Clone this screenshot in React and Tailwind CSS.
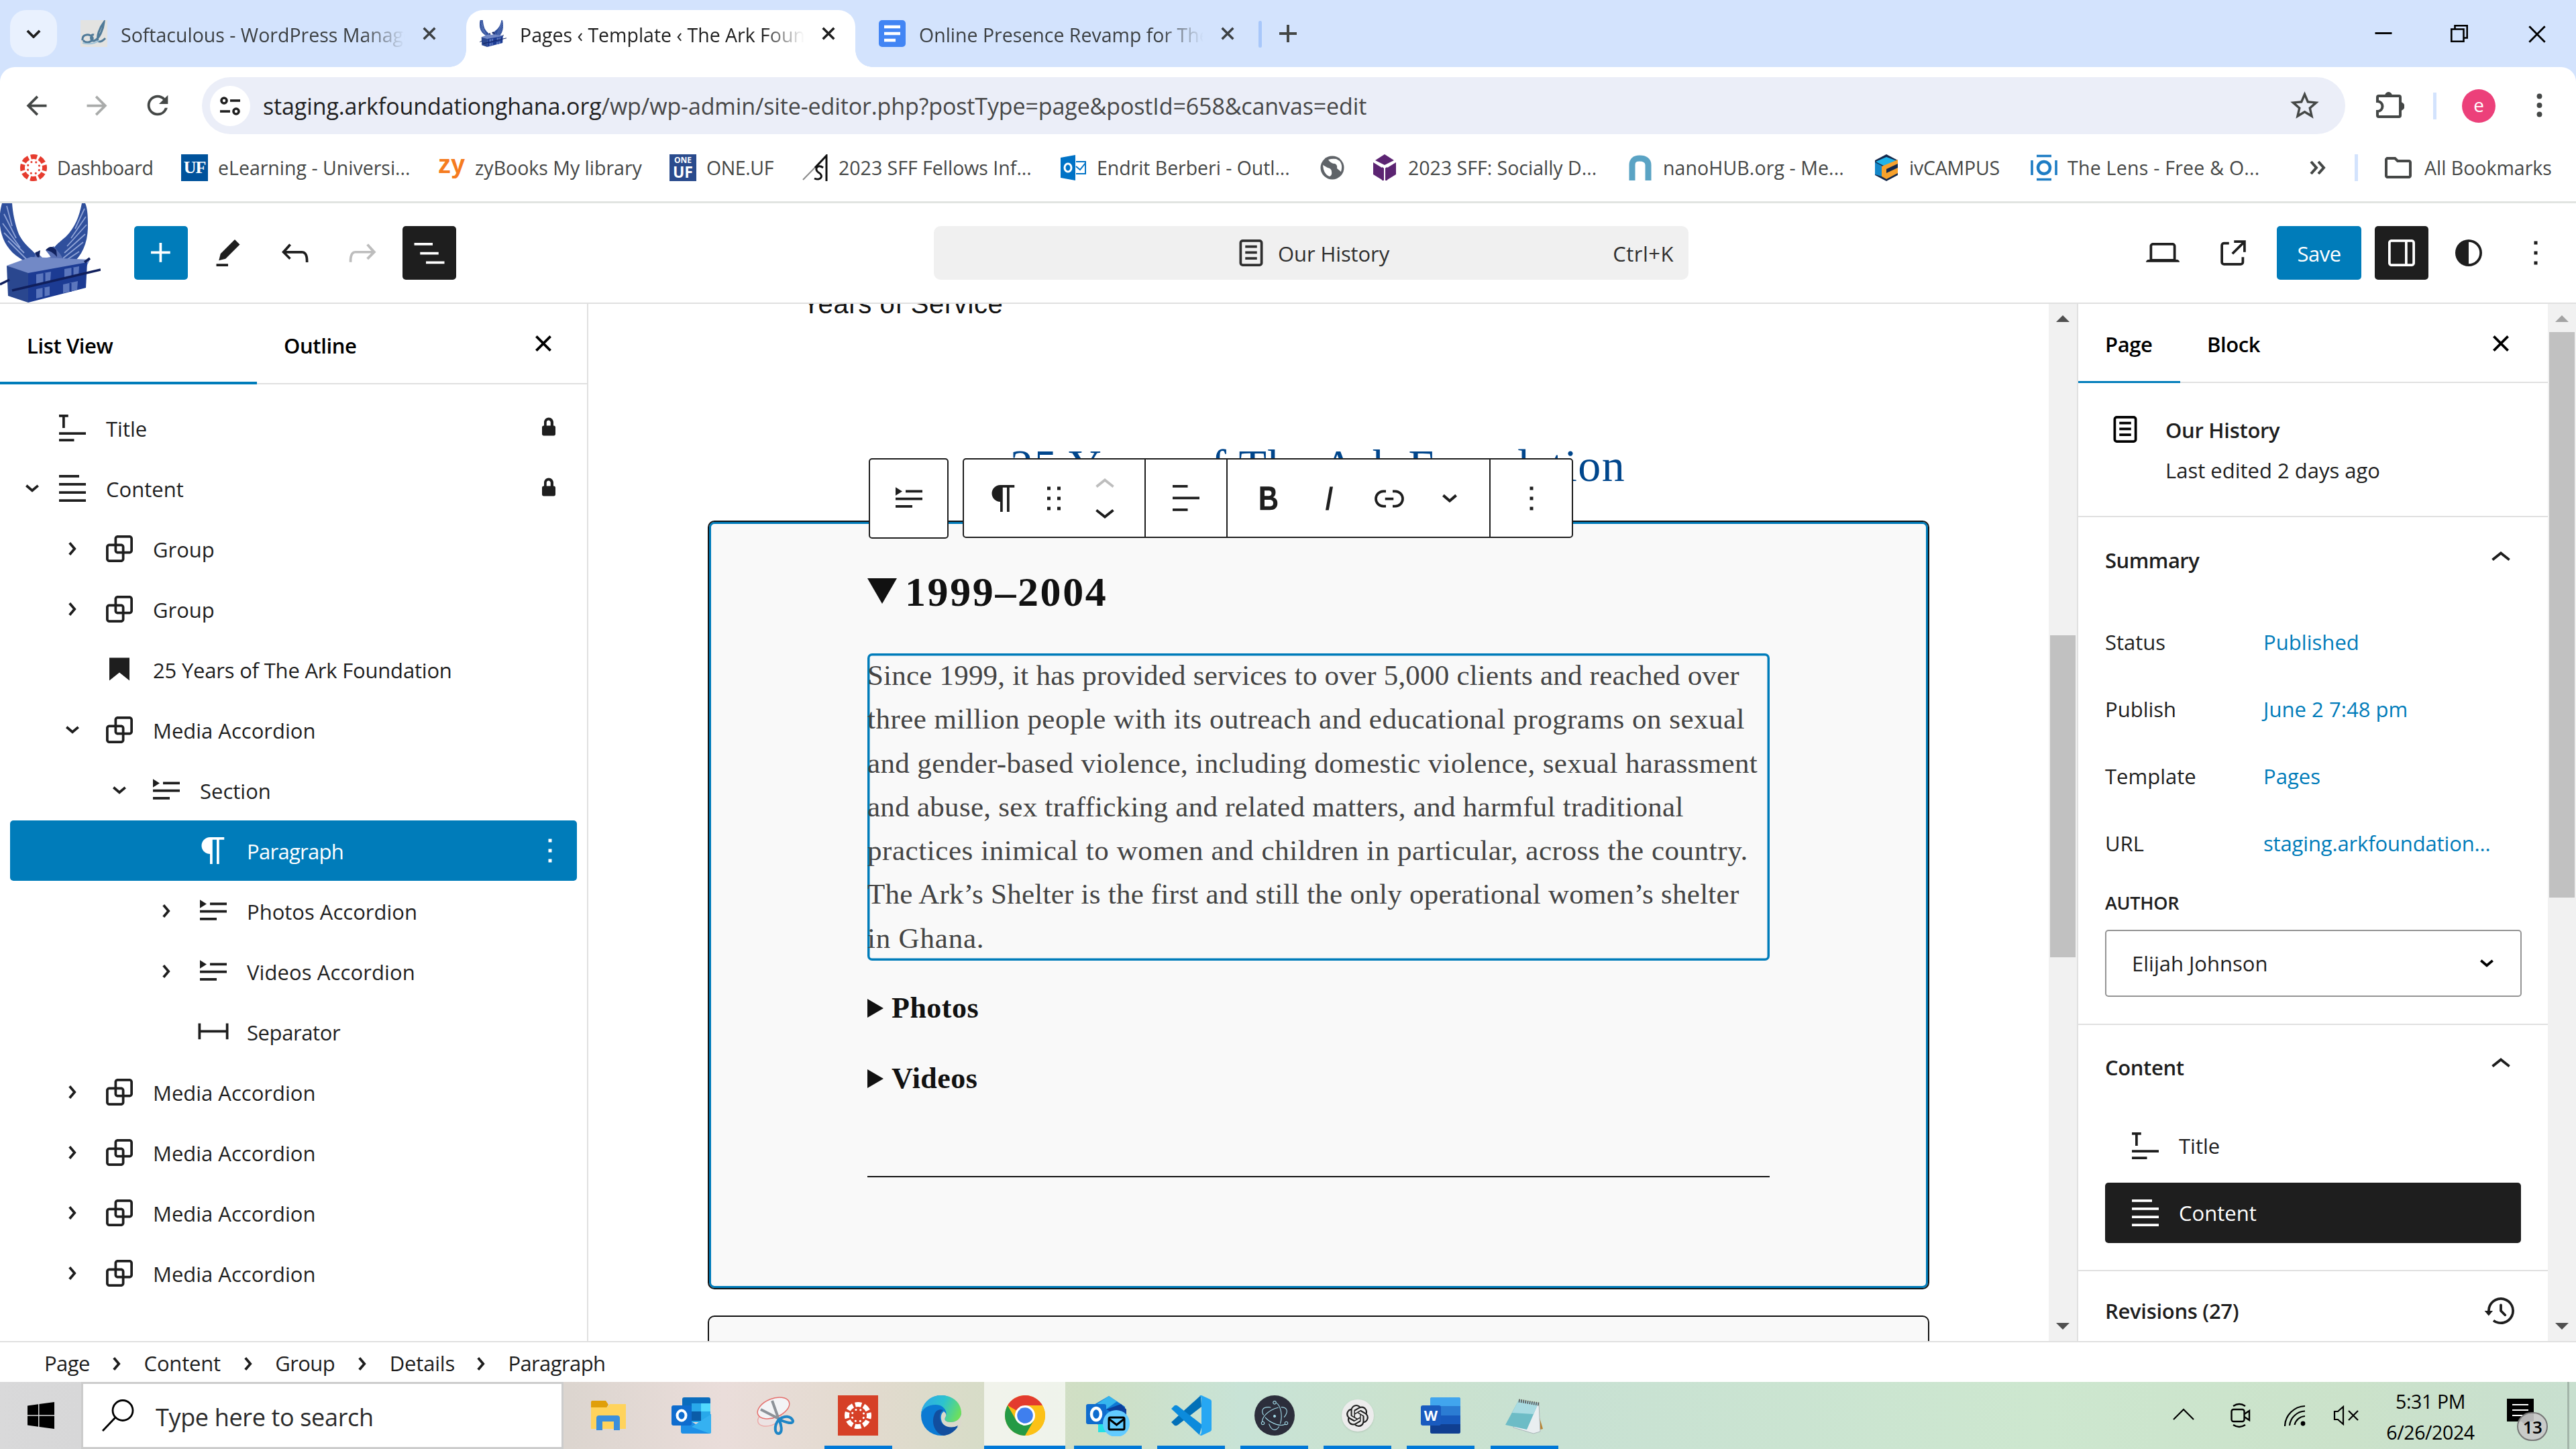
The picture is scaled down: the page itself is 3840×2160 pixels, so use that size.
import React from "react";
import { MdArrowBack, MdArrowForward, MdRefresh, MdStarBorder, MdOutlineFolder } from "react-icons/md";
import { SiOpenai, SiElectron } from "react-icons/si";

const P = {
  plus: "M11 12.5V17.5H12.5V12.5H17.5V11H12.5V6H11V11H6V12.5H11Z",
  edit: "m19 7-3-3-8.5 8.5-1 4 4-1L19 7Zm-7 11.5H5V20h7v-1.5Z",
  undo: "M18.3 11.7c-.6-.6-1.4-.9-2.3-.9H6.7l2.9-3.3-1.1-1-4.5 5L8.5 16l1-1-2.7-2.7H16c.5 0 .9.2 1.3.5 1 1 1 3.4 1 4.5v.3h1.5v-.2c0-1.5 0-4.3-1.5-5.7z",
  redo: "M15.6 6.5l-1.1 1 2.9 3.3H8c-.9 0-1.7.3-2.3.9-1.4 1.5-1.4 4.2-1.4 5.6v.2h1.5v-.3c0-1.1 0-3.5 1-4.5.3-.3.7-.5 1.3-.5h9.2L14.5 15l1.1 1.1 4.6-4.6-4.6-5z",
  listView: "M3 6h11v1.5H3V6Zm3.5 5.5h11V13h-11v-1.5ZM21 17H10v1.5h11V17Z",
  page: "M15.5 7.5h-7V9h7V7.5Zm-7 3.5h7v1.5h-7V11Zm7 3.5h-7V16h7v-1.5Z M17 4H7a2 2 0 0 0-2 2v12a2 2 0 0 0 2 2h10a2 2 0 0 0 2-2V6a2 2 0 0 0-2-2ZM7 5.5h10a.5.5 0 0 1 .5.5v12a.5.5 0 0 1-.5.5H7a.5.5 0 0 1-.5-.5V6a.5.5 0 0 1 .5-.5Z",
  desktop: "M20.5 16h-.7V8c0-1.1-.9-2-2-2H6.2c-1.1 0-2 .9-2 2v8h-.7c-.8 0-1.5.7-1.5 1.5h20c0-.8-.7-1.5-1.5-1.5zM5.7 8c0-.3.2-.5.5-.5h11.6c.3 0 .5.2.5.5v7.6H5.7V8z",
  external: "M19.5 4.5h-7V6h4.44l-5.97 5.97 1.06 1.06L18 7.06v4.44h1.5v-7Zm-13 1a2 2 0 0 0-2 2v10a2 2 0 0 0 2 2h10a2 2 0 0 0 2-2v-3H17v3a.5.5 0 0 1-.5.5h-10a.5.5 0 0 1-.5-.5v-10a.5.5 0 0 1 .5-.5h3V5.5h-3Z",
  drawer: "M18 4H6c-1.1 0-2 .9-2 2v12c0 1.1.9 2 2 2h12c1.1 0 2-.9 2-2V6c0-1.1-.9-2-2-2zm-4 14.5H6c-.3 0-.5-.2-.5-.5V6c0-.3.2-.5.5-.5h8v13zm4.5-.5c0 .3-.2.5-.5.5h-2.5v-13H18c.3 0 .5.2.5.5v12z",
  styles: "M20 12a8 8 0 1 1-16 0 8 8 0 0 1 16 0Zm-1.5 0a6.5 6.5 0 0 1-6.5 6.5v-13a6.5 6.5 0 0 1 6.5 6.5Z",
  more: "M13 19h-2v-2h2v2zm0-6h-2v-2h2v2zm0-6h-2V5h2v2z",
  close: "M12 13.06l3.712 3.713 1.061-1.06L13.061 12l3.712-3.712-1.06-1.06L12 10.938 8.288 7.227l-1.061 1.06L10.939 12l-3.712 3.712 1.06 1.061L12 13.061z",
  title: "m4 5.5h2v6.5h1.5v-6.5h2v-1.5h-5.5zm16 10.5h-16v-1.5h16zm-7 4h-9v-1.5h9z",
  content: "M4 20h16v-1.5H4V20zm0-4.8h16v-1.5H4v1.5zm0-6.4v1.5h16V8.8H4zM16 4H4v1.5h12V4z",
  group: "M18 4h-7c-1.1 0-2 .9-2 2v3H6c-1.1 0-2 .9-2 2v7c0 1.1.9 2 2 2h7c1.1 0 2-.9 2-2v-3h3c1.1 0 2-.9 2-2V6c0-1.1-.9-2-2-2zm-4.5 14c0 .3-.2.5-.5.5H6c-.3 0-.5-.2-.5-.5v-7c0-.3.2-.5.5-.5h3V13c0 1.1.9 2 2 2h2.5v3zm0-4.5H11c-.3 0-.5-.2-.5-.5v-2.5H13c.3 0 .5.2.5.5v2.5zm5-.5c0 .3-.2.5-.5.5h-3V11c0-1.1-.9-2-2-2h-2.5V6c0-.3.2-.5.5-.5h7c.3 0 .5.2.5.5v7z",
  heading: "M6 5V18.5911L12 13.8473L18 18.5911V5H6Z",
  details: "M4 16h10v1.5H4V16Zm0-4.5h16V13H4v-1.5ZM10 7h10v1.5H10V7Z m-6 -1.75 4 2.5-4 2.5v-5Z",
  paragraph: "m9.99609 14v-.2251l.00391.0001v6.225h1.5v-14.5h2.5v14.5h1.5v-14.5h3v-1.5h-8.50391c-2.76142 0-5 2.23858-5 5 0 2.7614 2.23858 5 5 5z",
  separator: "M4.5 12.5v4H3V7h1.5v3.987h15V7H21v9.5h-1.5v-4h-15Z",
  chevRight: "M10.8622 8.04053L14.2805 12.0286L10.8622 16.0167L9.72327 15.0405L12.3049 12.0286L9.72327 9.01672L10.8622 8.04053Z",
  chevDownSmall: "m15.99 10.889-3.988 3.418-3.988-3.418.976-1.14 3.012 2.582 3.012-2.581.976 1.139Z",
  chevUp: "M6.5 12.4L12 8l5.5 4.4-.9 1.2L12 10l-4.5 3.6-1-1.2z",
  chevDown: "M17.5 11.6L12 16l-5.5-4.4.9-1.2L12 14l4.5-3.6 1 1.2z",
  lock: "M15 11h-.2V9c0-1.5-1.2-2.8-2.8-2.8S9.2 7.5 9.2 9v2H9c-.6 0-1 .4-1 1v4c0 .6.4 1 1 1h6c.6 0 1-.4 1-1v-4c0-.6-.4-1-1-1zm-1.8 0h-2.5V9c0-.7.6-1.2 1.2-1.2s1.2.6 1.2 1.2v2z",
  drag: "M8 7h2V5H8v2zm0 6h2v-2H8v2zm0 6h2v-2H8v2zm6-14v2h2V5h-2zm0 8h2v-2h-2v2zm0 6h2v-2h-2v2z",
  align: "M13 5.5H4V4h9v1.5Zm7 7H4V11h16v1.5Zm-7 7H4V18h9v1.5Z",
  bold: "M14.7 11.3c1-.6 1.5-1.6 1.5-3 0-2.3-1.3-3.4-4-3.4H7v14h5.8c1.4 0 2.5-.3 3.3-1 .8-.7 1.2-1.7 1.2-2.9.1-1.9-.8-3.1-2.6-3.7zm-5.1-4h2.3c.6 0 1.1.1 1.4.4.3.3.5.7.5 1.2s-.2 1-.5 1.2c-.3.3-.8.4-1.4.4H9.6V7.3zm4.6 9c-.4.3-1 .4-1.7.4H9.6v-3.9h2.9c.7 0 1.3.2 1.7.5.4.3.6.8.6 1.5s-.2 1.2-.6 1.5z",
  italic: "M12.5 5L10 19h1.9l2.5-14z",
  link: "M10 17.389H8.444A5.194 5.194 0 1 1 8.444 7H10v1.5H8.444a3.694 3.694 0 0 0 0 7.389H10v1.5ZM14 7h1.556a5.194 5.194 0 0 1 0 10.39H14v-1.5h1.556a3.694 3.694 0 0 0 0-7.39H14V7Zm-4.5 6h5v-1.5h-5V13Z",
  backup: "M5.5 12h1.75l-2.5 3-2.5-3H4a8 8 0 113.134 6.35l.907-1.194A6.5 6.5 0 105.5 12zm9.53 1.97l-2.28-2.28V8.5a.75.75 0 00-1.5 0V12a.747.747 0 00.218.529l1.282-.84-1.28.842 2.5 2.5a.75.75 0 101.06-1.061z",
};

function Icon({ name, className = "" }) {
  return (
    <svg viewBox="0 0 24 24" className={"w-[60px] h-[60px] shrink-0 " + className} fill="currentColor" fillRule="evenodd">
      <path d={P[name]} />
    </svg>
  );
}

function Ark({ className }) {
  return (
    <svg viewBox="0 0 150 148" preserveAspectRatio="none" className={className}>
      <path d="M3 0 C-4 24 -2 58 24 78 L44 92 L60 86 C52 70 38 66 28 46 C22 30 19 14 18 0 Z" fill="#2f4f9c" />
      <path d="M122 0 C118 20 112 36 98 50 C86 60 78 66 74 78 L88 92 L112 86 C126 72 132 52 131 28 C131 18 130 6 127 0 Z" fill="#2f4f9c" />
      <path d="M10 4 L18 34 M6 16 L24 52 M4 30 L30 66 M6 44 L36 74 M12 56 L40 84 M126 8 L112 38 M128 20 L106 52 M129 32 L100 64 M127 46 L96 74 M124 58 L94 82 M118 72 L94 88" stroke="#8fa3d6" strokeWidth="1.8" fill="none" />
      <path d="M48 90 L54 72 L64 82 L76 80 L68 70 L80 64 L90 76 L98 90 L110 84 L104 100 L46 100 Z" fill="#5870b4" />
      <path d="M52 74 L60 70 L58 84 Z M68 70 Q76 60 84 70 L85 80 Q76 70 68 70 Z" fill="#12235f" />
      <path d="M10 93 L46 80 L134 84 L128 96 L42 106 Z" fill="#7289c6" />
      <path d="M10 93 L42 104 L42 148 L12 138 Z" fill="#2a478f" />
      <path d="M42 104 L130 88 L128 126 L42 148 Z" fill="#1c3b93" />
      <path d="M54 106 L76 102 L75 116 L54 121 Z M96 98 L118 94 L117 108 L96 112 Z M54 128 L74 124 L74 137 L54 142 Z M94 121 L116 116 L115 129 L94 134 Z" fill="#5b76bd" />
      <path d="M66 104 V120 M108 96 V110 M65 126 V140 M105 119 V132" stroke="#1c3b93" strokeWidth="3" />
      <path d="M18 130 L150 99 M0 121 L14 114 M126 88 L134 82" stroke="#101f5c" strokeWidth="3.5" />
    </svg>
  );
}

function CanvasRing({ color, className }) {
  return (
    <svg viewBox="0 0 40 40" className={className}>
      <circle cx="20" cy="20" r="16.5" fill="none" stroke={color} strokeWidth="7" strokeDasharray="9.4 3.56" strokeDashoffset="4.7" />
      <circle cx="20" cy="20" r="9" fill="none" stroke={color} strokeWidth="3" strokeLinecap="round" strokeDasharray="0.1 6.97" strokeDashoffset="3.5" />
    </svg>
  );
}

function X({ className = "", w = 3 }) {
  return (
    <svg viewBox="0 0 24 24" className={className} stroke="currentColor" strokeWidth={w} fill="none">
      <path d="M2 2 L22 22 M22 2 L2 22" />
    </svg>
  );
}

/* ---------- Browser ---------- */

function TabTitle({ children, className }) {
  return (
    <div className={"overflow-hidden whitespace-nowrap text-[28.5px] leading-[44px] [mask-image:linear-gradient(to_right,black_85%,transparent_100%)] " + className}>
      {children}
    </div>
  );
}

function TabStrip() {
  return (
    <div className="flex h-[100px] w-full bg-[#d3e3fd] text-[#3c4043]">
      <div className="mt-[15px] ml-[15px] flex h-[70px] w-[70px] items-center justify-center rounded-[24px] bg-[#e9f1fe]">
        <svg viewBox="0 0 24 14" className="h-[13px] w-[22px]" fill="none" stroke="#1f1f1f" strokeWidth="4"><path d="M2 2 L12 12 L22 2" /></svg>
      </div>
      <div className="ml-[35px] flex w-[575px] items-center">
        <svg viewBox="0 0 40 40" className="h-[40px] w-[40px]">
          <rect width="40" height="40" fill="#e3e3e1" />
          <path d="M3 30 C2 20 14 20 18 26 C20 32 8 36 4 30 M20 22 C14 20 14 32 20 31 C28 28 34 14 35 3 C28 12 24 24 26 31 C30 34 34 30 37 27" fill="none" stroke="#4f7a98" strokeWidth="3" />
          <path d="M3 34 Q18 38 28 30" fill="none" stroke="#9fc3d8" strokeWidth="2" />
        </svg>
        <TabTitle className="mt-[3px] ml-[20px] w-[424px]">Softaculous - WordPress Manager</TabTitle>
        <X className="ml-[26px] h-[20px] w-[20px]" w={4.2} />
      </div>
      <div className="relative mt-[15px] flex h-[85px] w-[580px] items-center rounded-t-[25px] bg-white pb-[15px] text-[#1f1f1f]">
        <div className="absolute bottom-0 -left-[25px] h-[25px] w-[25px] bg-[radial-gradient(circle_at_0_0,transparent_24.5px,white_25px)]" />
        <div className="absolute -right-[25px] bottom-0 h-[25px] w-[25px] bg-[radial-gradient(circle_at_100%_0,transparent_24.5px,white_25px)]" />
        <Ark className="ml-[20px] h-[40px] w-[40px]" />
        <TabTitle className="mt-[3px] ml-[20px] w-[424px]">Pages ‹ Template ‹ The Ark Foundation</TabTitle>
        <X className="ml-[26px] h-[20px] w-[20px]" w={4.2} />
      </div>
      <div className="ml-[35px] flex w-[530px] items-center">
        <svg viewBox="0 0 40 40" className="h-[40px] w-[40px]">
          <rect width="40" height="40" rx="5" fill="#4285f4" />
          <path d="M8 10 H32 M8 20 H32 M8 30 H25" stroke="white" strokeWidth="4.5" />
        </svg>
        <TabTitle className="mt-[3px] ml-[20px] w-[424px]">Online Presence Revamp for The Ark</TabTitle>
        <X className="ml-[26px] h-[20px] w-[20px]" w={4.2} />
      </div>
      <div className="mt-[31px] ml-[36px] h-[40px] w-[5px] rounded-full bg-[#a8c7fa]" />
      <svg viewBox="0 0 26 26" className="mt-[37px] ml-[26px] h-[26px] w-[26px]"><path d="M13 0 V26 M0 13 H26" stroke="#444746" strokeWidth="4" /></svg>
      <div className="mt-[37px] mr-[44px] ml-auto flex text-black">
        <svg viewBox="0 0 26 26" className="h-[25px] w-[26px]"><path d="M0 13 H26" stroke="black" strokeWidth="3" /></svg>
        <svg viewBox="0 0 26 26" className="ml-[87px] h-[26px] w-[26px]" fill="none" stroke="black" strokeWidth="2.6"><path d="M1.3 6.5 H19.5 V24.7 H1.3 Z M6.5 6.5 V1.3 H24.7 V19.5 H19.5" /></svg>
        <X className="ml-[89px] h-[28px] w-[28px]" w={2.4} />
      </div>
    </div>
  );
}

function AddressBar() {
  return (
    <div className="flex h-[100px] w-full items-center rounded-t-[22px] bg-white text-[#444746]">
      <MdArrowBack className="mt-[14px] ml-[32px] h-[45px] w-[45px]" />
      <MdArrowForward className="mt-[14px] ml-[45px] h-[45px] w-[45px] text-[#a9abaa]" />
      <MdRefresh className="mt-[14px] ml-[45px] h-[46px] w-[46px]" />
      <div className="mt-[15px] ml-[43px] flex h-[85px] w-[3195px] items-center rounded-full bg-[#ebeef8]">
        <div className="ml-[12px] flex h-[60px] w-[60px] items-center justify-center rounded-full bg-white">
          <svg viewBox="0 0 32 28" className="h-[28px] w-[32px]" fill="none" stroke="#1f1f1f" strokeWidth="3.6">
            <circle cx="7" cy="6" r="4" /><path d="M16 6 H31" /><circle cx="25" cy="22" r="4" /><path d="M1 22 H16" />
          </svg>
        </div>
        <div className="ml-[19px] text-[34px] leading-[50px] whitespace-nowrap tracking-[-0.12px] text-[#474747]">
          <span className="text-[#1f1f1f]">staging.arkfoundationghana.org</span>/wp/wp-admin/site-editor.php?postType=page&amp;postId=658&amp;canvas=edit
        </div>
        <MdStarBorder className="mr-[35px] ml-auto h-[51px] w-[51px]" />
      </div>
      <svg viewBox="0 0 42 41" className="mt-[13px] ml-[46px] h-[41px] w-[42px]">
        <path d="M4 7 H34 Q36 7 36 9 V36 Q36 38 34 38 H4 Q2 38 2 36 V30 A7.5 7.5 0 0 0 2 15 V9 Q2 7 4 7 Z" fill="none" stroke="#444746" strokeWidth="4" />
        <path d="M13 7 A5.5 6 0 0 1 24 7 Z M36 16 A6 6 0 0 1 36 29 Z" fill="#444746" />
      </svg>
      <div className="mt-[15px] ml-[43px] h-[40px] w-[5px] bg-[#d3e3fd]" />
      <div className="mt-[15px] ml-[38px] flex h-[50px] w-[50px] items-center justify-center rounded-full bg-[#ec407a] pb-[3px] text-[28px] leading-none text-white">e</div>
      <svg viewBox="0 0 10 40" className="mt-[14px] ml-[61px] h-[38px] w-[9px]" fill="#444746"><circle cx="5" cy="5" r="4.4" /><circle cx="5" cy="20" r="4.4" /><circle cx="5" cy="35" r="4.4" /></svg>
    </div>
  );
}

const ico = "h-[40px] w-[40px] shrink-0";

function Bookmark({ icon, text, w, gap = "gap-[15px]", track = "" }) {
  return (
    <div className={"flex shrink-0 items-center whitespace-nowrap " + gap + " " + w}>
      {icon}
      {text && <span className={"text-[28.5px] leading-[44px] " + track}>{text}</span>}
    </div>
  );
}

function Bookmarks() {
  return (
    <div className="flex h-[100px] w-full items-center bg-white pl-[30px] text-[#454746]">
      <Bookmark w="w-[240px]" track="tracking-[-0.4px]" text="Dashboard" icon={<CanvasRing color="#e63b2e" className={ico} />} />
      <Bookmark w="w-[383px]" text="eLearning - Universi..." icon={<div className={ico + " flex items-center justify-center bg-[#00529b] font-['Liberation_Serif'] text-[26px] leading-none font-bold text-white tracking-[-1px]"}>UF</div>} />
      <Bookmark w="w-[345px]" text="zyBooks My library" icon={<div className={ico + " -mt-[14px] font-['Liberation_Sans'] text-[38px] leading-[44px] font-bold text-[#f57c20]"}>zy</div>} />
      <Bookmark w="w-[197px]" track="tracking-[-0.4px]" text="ONE.UF" icon={<div className={ico + " flex flex-col items-center justify-center bg-[#2a4b8d] text-[12px] leading-[12px] font-bold text-white"}><span>ONE</span><span className="text-[23px] leading-[22px]">UF</span></div>} />
      <Bookmark w="w-[385px]" text="2023 SFF Fellows Inf..." icon={<svg viewBox="0 0 40 40" className={ico}><path d="M2 38 L37 2" fill="none" stroke="#888" strokeWidth="2" /><path d="M20 20 L37 2 V40" fill="none" stroke="#111" strokeWidth="3" /><path d="M32 20 C24 14 18 22 25 27 C34 32 28 40 19 36" fill="none" stroke="#111" strokeWidth="3" /></svg>} />
      <Bookmark w="w-[388px]" track="tracking-[-0.05px]" text="Endrit Berberi - Outl..." icon={<svg viewBox="0 0 40 40" className={ico}><path d="M1 5 L23 1 V39 L1 35 Z" fill="#0072c6" /><ellipse cx="12" cy="20" rx="5" ry="6" fill="none" stroke="white" strokeWidth="3" /><path d="M24 11 H38 V29 H24 M24 18 L30 23 L38 13" fill="none" stroke="#0072c6" strokeWidth="2" /></svg>} />
      <Bookmark w="w-[76px]" icon={<svg viewBox="0 0 36 36" className="h-[36px] w-[36px]"><circle cx="18" cy="18" r="17.5" fill="#5f6368" /><path d="M4 14 L11 18 Q17 19 17 24 Q18 29 14 31 Q5 28 4 14 Z M12 6 Q16 12 22 12 Q26 14 25 19 L31 24 Q34 14 29 8 L24 5 Q18 4 12 6 Z" fill="white" /></svg>} />
      <Bookmark w="w-[382px]" text="2023 SFF: Socially D..." icon={<svg viewBox="0 0 40 40" className={ico}><path d="M20 0 L34 9 L20 16 L6 9 Z M3 12 L16 20 V38 L3 30 Z M37 12 L24 20 V38 L37 30 Z" fill="#5c2472" /><path d="M16 19 h8 v20 h-8z" fill="#5c2472" /><path d="M4 11 L20 20 L36 11 M20 18 V40" stroke="white" strokeWidth="2" fill="none" /></svg>} />
      <Bookmark w="w-[366px]" track="tracking-[0.1px]" text="nanoHUB.org - Me..." gap="gap-[13px]" icon={<svg viewBox="0 0 40 40" className={ico}><path d="M7 39 V16 Q7 6 18 6 Q31 6 31 16 V39" fill="none" stroke="#5aa3c4" strokeWidth="9" /></svg>} />
      <Bookmark w="w-[235px]" track="tracking-[-0.2px]" text="ivCAMPUS" gap="gap-[14px]" icon={<svg viewBox="0 0 40 40" className={ico}><path d="M20 0 L37 9 V31 L20 40 L3 31 V9 Z" fill="#14284b" /><path d="M20 4 L36 10 L20 19 L4 11 Z" fill="#1fb4ea" /><path d="M3 12 L13 17 V33 L3 30 Z" fill="#1487c9" /><path d="M13 18 L37 8 V14 L20 22 V28 L37 20 V28 L20 37 L13 33 Z" fill="#f7a12c" /></svg>} />
      <Bookmark w="w-[411px]" track="tracking-[0.25px]" text="The Lens - Free & O..." icon={<svg viewBox="0 0 40 40" className={ico}><circle cx="20" cy="20" r="9" fill="none" stroke="#1d7cc4" strokeWidth="4.5" /><path d="M9 2.5 H31 M9 37.5 H31 M2 9 V31 M38 9 V31" stroke="#1d7cc4" strokeWidth="3.6" /></svg>} />
      <svg viewBox="0 0 24 20" className="ml-[5px] h-[20px] w-[24px]" fill="none" stroke="#444746" strokeWidth="4"><path d="M2 1 L10 10 L2 19 M13 1 L21 10 L13 19" /></svg>
      <div className="ml-[43px] h-[40px] w-[5px] bg-[#d3e3fd]" />
      <MdOutlineFolder className="ml-[36px] h-[48px] w-[48px]" />
      <span className="ml-[15px] text-[28.5px] whitespace-nowrap">All Bookmarks</span>
    </div>
  );
}

/* ---------- Editor header ---------- */

function EditorHeader() {
  return (
    <div className="flex h-[153px] w-full shrink-0 items-center border-t-[3px] border-b-2 border-t-[#e1e4e1] border-b-[#e0e0e0] bg-white text-[#1e1e1e]">
      <Ark className="h-[148px] w-[150px] self-start" />
      <div className="ml-[50px] flex h-[80px] w-[80px] items-center justify-center rounded-[5px] bg-[#007cba] text-white"><Icon name="plus" /></div>
      <Icon name="edit" className="ml-[30px]" />
      <Icon name="undo" className="ml-[40px]" />
      <Icon name="redo" className="ml-[40px] text-[#bdbdbd]" />
      <div className="ml-[30px] flex h-[80px] w-[80px] items-center justify-center rounded-[5px] bg-[#1e1e1e] text-white"><Icon name="listView" /></div>
      <div className="ml-[712px] flex h-[80px] w-[1125px] items-center rounded-[10px] bg-[#f0f0f0] text-[31px] text-[#2f2f2f]">
        <Icon name="page" className="ml-[443px]" />
        <span className="ml-[10px] pt-[3px] tracking-[-0.1px]">Our History</span>
        <span className="mr-[22px] ml-auto pt-[3px] tracking-[0.5px]">Ctrl+K</span>
      </div>
      <Icon name="desktop" className="ml-[677px]" />
      <Icon name="external" className="ml-[45px]" />
      <div className="ml-[35px] flex h-[80px] w-[126px] items-center justify-center rounded-[5px] bg-[#007cba] pt-[3px] text-[31px] tracking-[-0.5px] text-white">Save</div>
      <div className="ml-[20px] flex h-[80px] w-[80px] items-center justify-center rounded-[5px] bg-[#1e1e1e] text-white"><Icon name="drawer" /></div>
      <Icon name="styles" className="ml-[30px]" />
      <Icon name="more" className="ml-[40px]" />
    </div>
  );
}

/* ---------- List view ---------- */

const rows = [
  { l: 0, icon: "title", t: "Title", lock: true },
  { l: 0, c: "down", icon: "content", t: "Content", lock: true },
  { l: 1, c: "right", icon: "group", t: "Group" },
  { l: 1, c: "right", icon: "group", t: "Group" },
  { l: 1, icon: "heading", t: "25 Years of The Ark Foundation", track: "tracking-[-0.2px]" },
  { l: 1, c: "down", icon: "group", t: "Media Accordion" },
  { l: 2, c: "down", icon: "details", t: "Section" },
  { l: 3, icon: "paragraph", t: "Paragraph", sel: true, track: "tracking-[-0.7px]" },
  { l: 3, c: "right", icon: "details", t: "Photos Accordion" },
  { l: 3, c: "right", icon: "details", t: "Videos Accordion", track: "tracking-[0.1px]" },
  { l: 3, icon: "separator", t: "Separator", track: "tracking-[-0.4px]" },
  { l: 1, c: "right", icon: "group", t: "Media Accordion" },
  { l: 1, c: "right", icon: "group", t: "Media Accordion" },
  { l: 1, c: "right", icon: "group", t: "Media Accordion" },
  { l: 1, c: "right", icon: "group", t: "Media Accordion" },
];
const indent = ["pl-[3px] gap-0", "pl-[63px] gap-[10px]", "pl-[133px] gap-[10px]", "pl-[203px] gap-[10px]"];

function ListView() {
  return (
    <div className="flex w-[877px] shrink-0 flex-col border-r-2 border-[#e0e0e0] bg-white text-[#1e1e1e]">
      <div className="flex h-[120px] w-full border-b-2 border-[#e0e0e0] text-[31px] font-semibold tracking-[-0.4px] text-black">
        <div className="flex h-[120px] w-[383px] items-center border-b-4 border-[#007cba] pt-[8px] pl-[40px]">List View</div>
        <div className="flex h-[118px] items-center pt-[6px] pl-[40px]">Outline</div>
        <Icon name="close" className="mt-[29px] mr-[35px] ml-auto" />
      </div>
      <div className="flex flex-col px-[15px] pt-[20px]">
        {rows.map((r, i) => (
          <div key={i} className={"flex h-[90px] items-center rounded-[5px] " + indent[r.l] + (r.sel ? " bg-[#007cba] text-white" : "")}>
            <div className="h-[60px] w-[60px] shrink-0">{r.c && <Icon name={r.c === "down" ? "chevDownSmall" : "chevRight"} />}</div>
            <div className="flex items-center gap-[20px]">
              <Icon name={r.icon} />
              <span className={"pt-[1px] text-[31px] leading-[44px] whitespace-nowrap " + (r.track || "")}>{r.t}</span>
            </div>
            {r.lock && <Icon name="lock" className="-mt-[2px] mr-[12px] ml-auto" />}
            {r.sel && <Icon name="more" className="mr-[10px] ml-auto" />}
          </div>
        ))}
      </div>
    </div>
  );
}

/* ---------- Canvas ---------- */

const lines = [
  ["Since 1999, it has provided services to over 5,000 clients and reached over", "tracking-[0.2px]"],
  ["three million people with its outreach and educational programs on sexual", "tracking-[0.48px]"],
  ["and gender-based violence, including domestic violence, sexual harassment", "tracking-[0.38px]"],
  ["and abuse, sex trafficking and related matters, and harmful traditional", "tracking-[0.28px]"],
  ["practices inimical to women and children in particular, across the country.", "tracking-[0.56px]"],
  ["The Ark’s Shelter is the first and still the only operational women’s shelter", "tracking-[0.25px]"],
  ["in Ghana.", "tracking-[0.8px]"],
];

function Scrollbar({ w, dim, pad, thumb }) {
  return (
    <div className={"flex shrink-0 flex-col items-center bg-[#f1f1f1] " + w}>
      <svg viewBox="0 0 20 10" className={"mt-[17px] h-[10px] w-[20px] " + (dim ? "text-[#a3a3a3]" : "text-[#505050]")} fill="currentColor"><path d="M10 0 L20 10 H0 Z" /></svg>
      <div className={"w-[38px] bg-[#c1c1c1] " + pad + " " + thumb} />
      <svg viewBox="0 0 20 10" className="mt-auto mb-[17px] h-[10px] w-[20px] text-[#505050]" fill="currentColor"><path d="M10 10 L20 0 H0 Z" /></svg>
    </div>
  );
}

function BlockToolbar() {
  return (
    <div className="absolute top-[230px] left-[418px] flex text-[#1e1e1e]">
      <div className="flex h-[120px] w-[119px] items-center justify-center rounded-[5px] border-[2.5px] border-[#1e1e1e] bg-white"><Icon name="details" /></div>
      <div className="ml-[21px] flex h-[119px] w-[910px] items-stretch rounded-[5px] border-[2.5px] border-[#1e1e1e] bg-white">
        <div className="flex w-[271px] items-center border-r-2 border-[#1e1e1e]">
          <Icon name="paragraph" className="ml-[29px]" />
          <Icon name="drag" className="ml-[15px]" />
          <div className="ml-[16px] flex flex-col"><Icon name="chevUp" className="-mb-[10px] text-[#bdbdbd]" /><Icon name="chevDown" className="-mt-[10px]" /></div>
        </div>
        <div className="flex w-[122px] items-center justify-center border-r-2 border-[#1e1e1e]"><Icon name="align" /></div>
        <div className="flex w-[392px] items-center border-r-2 border-[#1e1e1e]">
          <Icon name="bold" className="ml-[31px]" />
          <Icon name="italic" className="ml-[30px]" />
          <Icon name="link" className="ml-[30px]" />
          <Icon name="chevDownSmall" className="ml-[30px] scale-110" />
        </div>
        <div className="flex flex-1 items-center justify-center"><Icon name="more" /></div>
      </div>
    </div>
  );
}

function Canvas() {
  return (
    <div className="relative flex h-full w-[2177px] shrink-0 flex-col overflow-hidden bg-white">
      <div className="-mt-[30px] shrink-0 pl-[319px] font-['Liberation_Sans'] text-[40px] leading-[60px] tracking-[0.6px] text-[#111]">Years of Service</div>
      <div className="mt-[171px] shrink-0 pl-[629px] font-['Liberation_Serif'] text-[68px] leading-[80px] tracking-[1.4px] whitespace-nowrap text-[#00468c]">25 Years of The Ark Foundation</div>
      <div className="mt-[42px] ml-[178px] h-[1146px] w-[1821px] shrink-0 rounded-[10px] border-2 border-[#111] bg-[#f9f9f9] pl-[236px] font-['Liberation_Serif'] text-[#111] shadow-[inset_0_0_0_3px_#007cba]">
        <div className="mt-[64px] flex h-[80px] items-center gap-[12px] text-[62px] leading-[80px] font-bold tracking-[2.6px]">
          <svg viewBox="0 0 44 38" className="-mt-[2px] h-[38px] w-[44px]"><path d="M0 0 H44 L22 38 Z" fill="#111" /></svg>1999–2004
        </div>
        <div className="mt-[52px] h-[458px] w-[1345px] rounded-[7px] text-[43px] leading-[65.3px] text-[#444] shadow-[inset_0_0_0_3.5px_#007cba]">
          {lines.map(([t, c], i) => <div key={i} className={"whitespace-nowrap " + c}>{t}</div>)}
        </div>
        {["Photos", "Videos"].map((t, i) => (
          <div key={t} className={"flex h-[66px] items-center gap-[12px] text-[44px] leading-[66px] font-bold tracking-[0.5px] " + (i ? "mt-[39px]" : "mt-[38px]")}>
            <svg viewBox="0 0 24 28" className="h-[28px] w-[24px]"><path d="M0 0 L24 14 L0 28 Z" fill="#111" /></svg>{t}
          </div>
        ))}
        <div className="mt-[112px] h-[2px] w-[1345px] bg-[#111]" />
      </div>
      <div className="mt-[39px] ml-[178px] h-[120px] w-[1821px] shrink-0 rounded-[10px] border-2 border-[#111] bg-[#f9f9f9]" />
      <BlockToolbar />
    </div>
  );
}

/* ---------- Settings ---------- */

function Inspector() {
  return (
    <div className="flex h-full w-[702px] shrink-0 flex-col overflow-hidden border-l-2 border-[#e0e0e0] bg-white text-[31px] leading-[44px] text-[#1e1e1e]">
      <div className="flex h-[118px] w-full shrink-0 border-b-2 border-[#e0e0e0] font-semibold tracking-[-0.4px] text-black">
        <div className="flex h-[118px] w-[152px] items-center border-b-[3px] border-[#007cba] pt-[5px] pl-[40px]">Page</div>
        <div className="flex h-[116px] items-center pt-[4px] pl-[40px]">Block</div>
        <Icon name="close" className="mt-[29px] mr-[40px] ml-auto" />
      </div>
      <div className="flex h-[200px] shrink-0 border-b-2 border-[#e0e0e0] pt-[40px] pl-[40px]">
        <Icon name="page" className="-mt-[1px] text-black" />
        <div className="ml-[30px] flex flex-col gap-[16px] pt-[8px]">
          <span className="font-semibold tracking-[-0.3px]">Our History</span>
          <span>Last edited 2 days ago</span>
        </div>
      </div>
      <div className="flex h-[128px] shrink-0 items-center pr-[40px] pl-[40px] font-semibold tracking-[-0.5px]">Summary<Icon name="chevUp" className="-mt-[6px] ml-auto" /></div>
      <div className="flex shrink-0 flex-col gap-[56px] pt-[36px] pl-[40px]">
        {[["Status", "Published"], ["Publish", "June 2 7:48 pm"], ["Template", "Pages"], ["URL", "staging.arkfoundation..."]].map(([a, b]) => (
          <div key={a} className="flex whitespace-nowrap"><span className="w-[236px]">{a}</span><span className={(b.length > 20 ? "tracking-[-0.15px]" : "tracking-[0.05px]") + " text-[#007cba]"}>{b}</span></div>
        ))}
      </div>
      <div className="mt-[45px] shrink-0 pl-[40px] text-[27px] font-semibold tracking-[-0.3px]">AUTHOR</div>
      <div className="mt-[18px] ml-[40px] flex h-[100px] w-[621px] shrink-0 items-center rounded-[5px] border-2 border-[#949494] pl-[38px]">
        Elijah Johnson<Icon name="chevDownSmall" className="mr-[20px] ml-auto text-black" />
      </div>
      <div className="mt-[40px] flex h-[128px] shrink-0 items-center border-t-2 border-[#e0e0e0] pr-[40px] pl-[40px] font-semibold tracking-[-0.4px]">Content<Icon name="chevUp" className="-mt-[8px] ml-auto" /></div>
      <div className="mt-[9px] ml-[40px] flex h-[90px] w-[620px] shrink-0 items-center gap-[20px] pl-[30px]"><Icon name="title" />Title</div>
      <div className="mt-[10px] ml-[40px] flex h-[90px] w-[620px] shrink-0 items-center gap-[20px] rounded-[5px] bg-[#1e1e1e] pl-[30px] text-white"><Icon name="content" /><span>Content</span></div>
      <div className="mt-[40px] flex h-[120px] shrink-0 items-center border-t-2 border-[#e0e0e0] pr-[40px] pl-[40px] font-semibold tracking-[-0.3px]">Revisions (27)<Icon name="backup" className="ml-auto" /></div>
    </div>
  );
}

function Breadcrumb() {
  const items = [["Page", "w-[68px]"], ["Content", "w-[115px] tracking-[-0.2px]"], ["Group", "w-[90px]"], ["Details", "w-[96px] tracking-[-0.2px]"], ["Paragraph", "w-[144px]"]];
  return (
    <div className="flex h-[61px] w-full shrink-0 items-center border-t-2 border-[#e0e0e0] bg-white pt-[4px] pl-[66px] text-[31px] tracking-[-0.6px] text-[#1e1e1e]">
      {items.map(([t, w], i) => (
        <React.Fragment key={t}>
          {i > 0 && <Icon name="chevRight" className="mx-[10.3px]" />}
          <span className={"whitespace-nowrap " + w}>{t}</span>
        </React.Fragment>
      ))}
    </div>
  );
}

/* ---------- Taskbar ---------- */

function OutlookBase() {
  return (
    <>
      <rect x="16" y="3" width="42" height="36" rx="3" fill="#0a6cbd" />
      <path d="M30 12 H58 V40 H30 Z" fill="#28a8ea" /><path d="M44 12 H58 V24 H44 Z" fill="#50d9ff" /><path d="M30 24 H44 V38 H30 Z" fill="#0a5ca8" />
      <path d="M14 30 L38 44 L59 28 V54 Q59 57 56 57 H17 Q14 57 14 54 Z" fill="#1e8fe6" /><path d="M59 28 L30 47 L57 57 Q59 57 59 54 Z" fill="#35b1f1" />
      <rect x="0" y="15" width="30" height="30" rx="3" fill="#0f6cce" /><ellipse cx="15" cy="30" rx="6.5" ry="7.5" fill="none" stroke="white" strokeWidth="4" />
    </>
  );
}

const taskIcons = [
  { el: <svg viewBox="0 0 60 60" className="h-[60px] w-[60px]"><path d="M4 10 Q4 8 6 8 H26 L30 14 L26 20 H4 Z" fill="#e09f0a" /><path d="M4 18 L28 18 L32 13 H56 V50 H4 Z" fill="#ffd35c" /><path d="M12 52 V34 Q12 30 16 30 H43 Q47 30 47 34 V52 H38 V39 H21 V52 Z" fill="#3b8fdc" /></svg> },
  { el: <svg viewBox="0 0 60 60" className="h-[60px] w-[60px]"><OutlookBase /></svg> },
  { el: <svg viewBox="0 0 60 60" className="h-[60px] w-[60px]"><ellipse cx="22" cy="34" rx="18" ry="11" fill="#ece3e3" stroke="#ecaaa8" strokeWidth="1.5" transform="rotate(-20 22 34)" /><ellipse cx="28" cy="19" rx="25" ry="14" fill="#f3f4f6" stroke="#e5706d" strokeWidth="1.5" transform="rotate(-22 28 19)" /><path d="M26 8 L36 36 M9 21 L42 38" stroke="#8d9298" strokeWidth="4" /><path d="M36 36 C28 46 30 58 36 57 C42 55 40 44 36 36 C44 30 54 30 57 38 C57 44 46 40 36 36" fill="none" stroke="#1f86c6" strokeWidth="4" /></svg> },
  { run: true, el: <div className="flex h-[60px] w-[60px] items-center justify-center bg-[#d64027]"><CanvasRing color="white" className="h-[40px] w-[40px]" /></div> },
  { el: <svg viewBox="0 0 60 60" className="h-[60px] w-[60px]"><defs><linearGradient id="eg" x1="0" y1="0.3" x2="1" y2="0.6"><stop offset="0" stopColor="#2ea9e8" /><stop offset="0.5" stopColor="#2cc3cf" /><stop offset="1" stopColor="#6fe05a" /></linearGradient></defs><circle cx="30" cy="30" r="30" fill="#0b7ad3" /><path d="M0 28 C2 10 15 0 30 0 C48 0 60 12 60 26 C60 36 52 40 44 40 C37 40 34 37 36 33 C41 25 34 14 22 14 C10 14 2 20 0 28 Z" fill="url(#eg)" /><path d="M36 33 C34 37 37 40 44 40 C52 40 58 36 60 28 L60 46 L54 47 C46 51 32 48 30 36 C29 30 31 26 34 24 C38 27 38 30 36 33 Z" fill="#dad9cb" /><path d="M20 28 C14 42 22 58 34 60 C44 59 52 52 55 45 C44 51 28 46 28 32 C28 26 31 24 33 22 C27 20 22 23 20 28 Z" fill="#124e9e" /></svg> },
  { active: true, el: <svg viewBox="0 0 60 60" className="h-[60px] w-[60px]"><circle cx="30" cy="30" r="30" fill="#fbbc14" /><path d="M30 30 L4 15 A30 30 0 0 1 56 15 Z" fill="#e33b2e" /><path d="M30 15 H56 A30 30 0 0 1 30 60 L43 37 Z" fill="#fcc117" /><path d="M4 15 A30 30 0 0 0 30 60 L43 37.5 L17 37.5 Z" fill="#249a45" /><circle cx="30" cy="30" r="15" fill="white" /><circle cx="30" cy="30" r="11.8" fill="#3f7fee" /></svg> },
  { run: true, el: <svg viewBox="0 0 65 62" className="h-[62px] w-[65px]"><path d="M10 16 L34 2 L58 18 V36 L34 54 L10 40 Z" fill="#0f78d4" /><path d="M10 18 L34 2 L46 10 L24 26 Z" fill="#35b5ee" /><path d="M30 22 L52 14 L60 22 V36 Z" fill="#0c3f9c" /><path d="M18 42 H30 V56 H18 Z" fill="#25e0e4" /><rect x="0" y="14" width="30" height="30" rx="3" fill="#0f6cce" /><ellipse cx="15" cy="29" rx="7" ry="9" fill="none" stroke="white" strokeWidth="4.5" /><circle cx="45" cy="43" r="20" fill="#62cbff" /><rect x="34" y="34" width="23" height="18" rx="2" fill="none" stroke="black" strokeWidth="3" /><path d="M34 36 L45.5 45 L57 36" fill="none" stroke="black" strokeWidth="3" /></svg> },
  { run: true, el: <svg viewBox="0 0 60 60" className="h-[60px] w-[60px]"><path d="M44 0 L0 40 L5 45 Q8 46 10 44 L45 17 Z" fill="#0270b8" /><path d="M5 15 L0 20 L42 59 L46 44 L10 16 Q8 14 5 15 Z" fill="#0c8bdc" /><path d="M45 0 L58 6 Q60 7 60 9 V51 Q60 53 58 54 L45 60 Q43 60 42 59 Q45 58 45 54 V6 Q45 2 42 1 Q43 0 45 0 Z" fill="#27a7f3" /></svg> },
  { run: true, el: <div className="flex h-[60px] w-[60px] items-center justify-center rounded-full bg-[#2c2e3b]"><SiElectron className="h-[44px] w-[44px] text-[#9fd6e4]" /></div> },
  { run: true, el: <div className="flex h-[48px] w-[48px] items-center justify-center rounded-full bg-[#ececec] shadow-sm"><SiOpenai className="h-[33px] w-[33px] text-[#222]" /></div> },
  { run: true, el: <svg viewBox="0 0 60 60" className="h-[60px] w-[60px]"><rect x="14" y="3" width="45" height="54" rx="3" fill="#2b7cd3" /><path d="M14 16 V6 Q14 3 17 3 H56 Q59 3 59 6 V16 Z" fill="#41a5ee" /><path d="M14 30 H59 V43 H14 Z" fill="#185abd" /><path d="M14 43 H59 V54 Q59 57 56 57 H17 Q14 57 14 54 Z" fill="#103f91" /><rect x="0" y="15" width="30" height="30" rx="3" fill="#1a5bbf" /><text x="15" y="38" textAnchor="middle" fontFamily="Open Sans" fontWeight="700" fontSize="21" fill="white">W</text></svg> },
  { run: true, el: <svg viewBox="0 0 60 60" className="h-[60px] w-[60px]"><path d="M46 10 L58 50 L50 52 Z" fill="#b98432" /><path d="M22 8 L52 12 L54 54 L44 57 L14 48 Z" fill="#e9eef0" stroke="#a9b5b8" strokeWidth="1" /><path d="M22 7 L51 12 L34 51 L2 44 Z" fill="#6dbcc6" /><path d="M22 7 L51 12 L44 28 L12 26 Z" fill="#a9dbe2" /><path d="M22 8 L52 13" stroke="#555" strokeWidth="5" strokeDasharray="1.6 1.6" /></svg> },
];

function Taskbar() {
  return (
    <div className="flex h-[100px] w-full shrink-0 bg-[linear-gradient(to_right,#d9d9da_0px,#d7d7d8_120px,#dcd5cf_850px,#eaddda_1080px,#e2dace_1300px,#d8dcc8_1450px,#cfdfc4_1620px,#c8e3d6_1850px,#cbe2ce_2100px,#c8e1d3_2320px,#cde7cf_3040px,#cbe2ca_3500px,#c8dfcf_3840px)] text-black">
      <div className="flex w-[121px] items-center justify-center">
        <svg viewBox="0 0 40 40" className="h-[40px] w-[40px]"><path d="M0 5.5 L16 3.3 V19.3 H0 Z M17.5 3 L40 0 V19.3 H17.5 Z M0 20.7 H16 V36.7 L0 34.5 Z M17.5 20.7 H40 V40 L17.5 37 Z" fill="black" /></svg>
      </div>
      <div className="flex w-[719px] items-center border-[3px] border-[#cccccc] bg-white">
        <svg viewBox="0 0 48 48" className="ml-[28px] h-[48px] w-[48px]" fill="none" stroke="black" strokeWidth="2.8"><circle cx="31" cy="16.5" r="15" /><path d="M20 27 L1 47" /></svg>
        <span className="ml-[32px] pt-[5px] text-[36px] tracking-[-0.35px] whitespace-nowrap text-[#2b2b2b]">Type here to search</span>
      </div>
      <div className="ml-[5px] flex">
        {taskIcons.map((t, i) => (
          <div key={i} className="flex h-[100px] w-[124.1px] justify-center">
            <div className={"flex h-full flex-col items-center " + (t.active ? "w-[121px] bg-white/65" : "w-[101px]")}>
              <div className="flex h-[95px] items-center pt-[5px]">{t.el}</div>
              {(t.run || t.active) && <div className="h-[5px] w-full bg-[#0078d7]" />}
            </div>
          </div>
        ))}
      </div>
      <div className="mr-[10px] ml-auto flex items-center">
        <svg viewBox="0 0 32 18" className="-mt-[4px] h-[18px] w-[32px]" fill="none" stroke="black" strokeWidth="2.2"><path d="M1 17 L16 2 L31 17" /></svg>
        <svg viewBox="0 0 30 38" className="ml-[54px] h-[38px] w-[30px]" fill="none" stroke="black" strokeWidth="2.4"><rect x="1.5" y="10" width="19" height="18" rx="3" /><path d="M20.5 17 L28 12 V26 L20.5 21 M4 5 Q13 -1 22 5 M4 33 Q13 39 22 33" /></svg>
        <svg viewBox="0 0 32 32" className="ml-[50px] h-[32px] w-[32px]" fill="none" stroke="black" strokeWidth="2.2"><path d="M1 32 A31 31 0 0 1 31 2 M8 31 A24 24 0 0 1 31 9.5 M15.5 30 A17 17 0 0 1 31 17" /><circle cx="28" cy="28" r="3.4" fill="black" stroke="none" /></svg>
        <svg viewBox="0 0 38 30" className="ml-[41px] h-[30px] w-[38px]" fill="none" stroke="black" strokeWidth="2.2"><path d="M2 9 H7 L15 2 V28 L7 21 H2 Z M23 8 L37 22 M37 8 L23 22" /></svg>
        <div className="ml-[35px] flex w-[144px] flex-col items-center pt-[4px] text-[28.5px] leading-[46px] tracking-[-0.4px] whitespace-nowrap"><span>5:31 PM</span><span>6/26/2024</span></div>
        <div className="relative ml-[42px] h-[74px] w-[64px]">
          <svg viewBox="0 0 40 46" className="mt-[12px] h-[46px] w-[40px]"><path d="M0 0 H40 V34 H32 V44 L22 34 H0 Z" fill="black" /><path d="M8 9 H32 M8 17 H32 M8 25 H24" stroke="white" strokeWidth="2.2" /></svg>
          <div className="absolute top-[32px] left-[15px] flex h-[43px] w-[46px] items-center justify-center rounded-full border-2 border-[#777] bg-[#c9c9c9]/90 text-[26px] leading-none font-semibold tracking-[-0.5px]">13</div>
        </div>
        <div className="ml-[26px] h-[100px] w-[3px] bg-[#a3b5a9]" />
      </div>
    </div>
  );
}

export default function App() {
  return (
    <div className="flex h-[2160px] w-[3840px] flex-col overflow-hidden bg-white font-['Open_Sans',sans-serif]">
      <div className="flex shrink-0 flex-col bg-[#d3e3fd]">
        <TabStrip />
        <AddressBar />
        <Bookmarks />
      </div>
      <EditorHeader />
      <div className="flex h-[1546px] shrink-0 overflow-hidden">
        <ListView />
        <Canvas />
        <Scrollbar w="w-[42px]" pad="mt-[467px]" thumb="h-[480px]" />
        <Inspector />
        <Scrollbar w="w-[42px]" dim pad="mt-[15px]" thumb="h-[843px]" />
      </div>
      <Breadcrumb />
      <Taskbar />
    </div>
  );
}
